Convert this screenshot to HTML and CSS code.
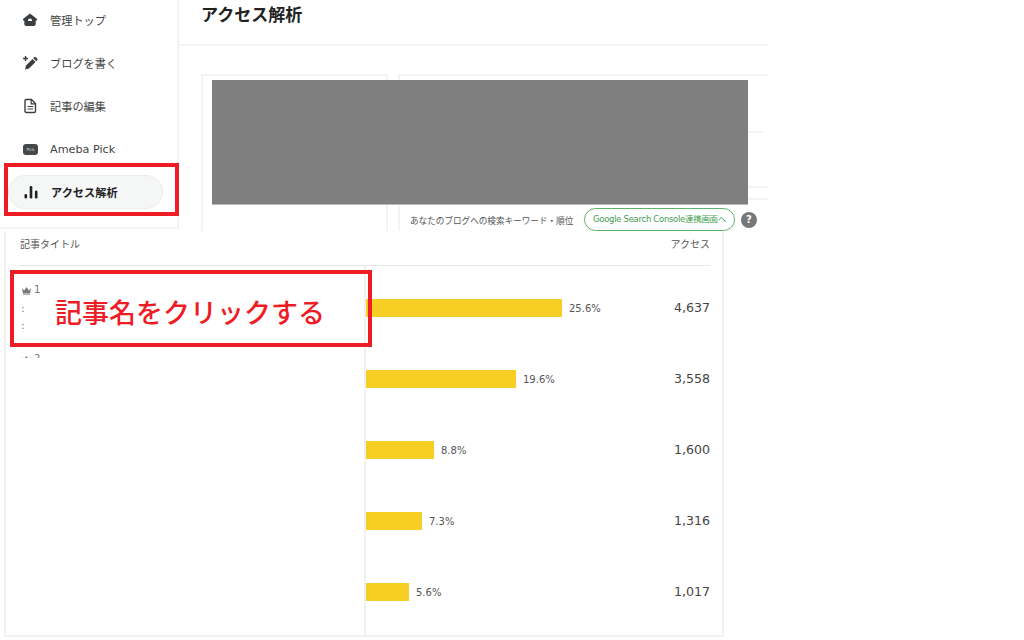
FILE: index.html
```html
<!DOCTYPE html>
<html lang="ja">
  <head>
    <title>アクセス解析</title>
    <meta name="viewport" content="width=device-width, initial-scale=1.0" />
    <link rel="stylesheet" href="styles.css">
  </head>
  <body>
    <section class="dash">
      <nav class="side">
        <a class="side-item">
          <svg class="side-icon" viewBox="0 0 16 16"><path d="M8 1.500 15 7v1.600h-1.300V12a2 2 0 0 1-2 2H4.300a2 2 0 0 1-2-2V8.600H1V7z" fill="#3a3e40"/><path d="M8 6.500a2 2 0 0 1 2 2v.5H6v-.5a2 2 0 0 1 2-2z" fill="#fff"/></svg>
          管理トップ
        </a>
        <a class="side-item">
          <svg class="side-icon" viewBox="0 0 16 16"><path d="M3 14.500l1-4 6.500-6.500 3 3L7 13.500z" fill="#3a3e40"/><path d="M11.300 3.200l1-1a1 1 0 0 1 1.400 0l1.600 1.600a1 1 0 0 1 0 1.400l-1 1z" fill="#3a3e40"/><path d="M3.500 1v5M1 3.500h5" stroke="#3a3e40" stroke-width="1.400"/></svg>
          ブログを書く
        </a>
        <a class="side-item">
          <svg class="side-icon" viewBox="0 0 16 16"><path d="M3 2.800A1.300 1.300 0 0 1 4.300 1.500H9.500L13.500 5.500V13.200A1.300 1.300 0 0 1 12.200 14.500H4.300A1.300 1.300 0 0 1 3 13.200z" fill="none" stroke="#3a3e40" stroke-width="1.400"/><path d="M9.200 1.800V5.800H13.200M5.500 8.500h5.500M5.500 11h5.500" fill="none" stroke="#3a3e40" stroke-width="1.200"/></svg>
          記事の編集
        </a>
        <a class="side-item">
          <span class="pick-icon">Pick</span>
          Ameba Pick
        </a>
        <a class="side-item side-item-active">
          <svg class="side-icon" viewBox="0 0 16 16"><rect x="1.500" y="10" width="2.600" height="4.500" rx="1.200" fill="#222"/><rect x="6.700" y="2" width="2.600" height="12.500" rx="1.200" fill="#222"/><rect x="11.900" y="6.500" width="2.600" height="8" rx="1.200" fill="#222"/></svg>
          アクセス解析
        </a>
      </nav>

      <div class="dash-main">
        <header class="dash-head">
          <h1>アクセス解析</h1>
        </header>
        <div class="cards">
          <div class="card card-small"></div>
          <div class="card card-wide">
            <div class="stat stat-first"></div>
            <div class="stat stat-second"></div>
            <div class="stat stat-third"></div>
            <div class="keywords">
              <span class="keywords-label">あなたのブログへの検索キーワード・順位</span>
              <a class="console-btn">Google Search Console連携画面へ</a>
              <span class="help">?</span>
            </div>
          </div>
        </div>
      </div>

      <div class="redact"></div>
      <div class="mark mark-nav"></div>
    </section>

    <section class="report">
      <div class="report-head">
        <span>記事タイトル</span>
        <span>アクセス</span>
      </div>
      <div class="report-body">
        <div class="titles">
          <div class="rank">
            <svg class="crown" viewBox="0 0 12 10"><path d="M1 2.500 3.500 5 6 1l2.500 4L11 2.500 10 8H2z" fill="#777"/><rect x="2" y="8.500" width="8" height="1" fill="#777"/></svg>
            1
          </div>
          <div class="title-cut title-cut-first">:</div>
          <div class="title-cut">:</div>
          <div class="rank-clipped"><div class="rank">
            <svg class="crown" viewBox="0 0 12 10"><path d="M1 2.500 3.500 5 6 1l2.500 4L11 2.500 10 8H2z" fill="#777"/></svg>
            2
          </div></div>
        </div>
        <div class="rows">
          <div class="row"><div class="bar" style="width:196px"></div><span class="pct">25.6%</span><span class="count">4,637</span></div>
          <div class="row"><div class="bar" style="width:150px"></div><span class="pct">19.6%</span><span class="count">3,558</span></div>
          <div class="row"><div class="bar" style="width:68px"></div><span class="pct">8.8%</span><span class="count">1,600</span></div>
          <div class="row"><div class="bar" style="width:56px"></div><span class="pct">7.3%</span><span class="count">1,316</span></div>
          <div class="row"><div class="bar" style="width:43px"></div><span class="pct">5.6%</span><span class="count">1,017</span></div>
        </div>
      </div>

      <div class="mark mark-title">記事名をクリックする</div>
    </section>
  </body>
</html>
```

FILE: styles.css
```css
* {
  box-sizing: border-box;
}

html,
body {
  height: 640px;
  overflow: hidden;
}

body {
  margin: 0;
  background: #fff;
  color: #333;
  font-family: "DejaVu Sans", "Noto Sans CJK JP", sans-serif;
}

/* top screenshot */
.dash {
  position: relative;
  display: flex;
  width: 768px;
  height: 231px;
}

.side {
  width: 179px;
  height: 229px;
  flex: none;
  border-right: 2px solid #f3f3f3;
  border-bottom: 2px solid #f3f3f3;
  padding: 0 0 0 8px;
  display: flex;
  flex-direction: column;
}

.side-item {
  display: flex;
  align-items: center;
  width: 155px;
  height: 34px;
  margin-top: 9px;
  padding-left: 14px;
  gap: 12px;
  font-size: 11.200px;
  color: #444;
}

.side-item:first-child {
  margin-top: 3px;
}

.side-item-active {
  border: 1px solid #ececec;
  border-radius: 17px;
  background: #f5f6f6;
  font-weight: 700;
  color: #222;
}

.side-icon {
  width: 16px;
  height: 16px;
  flex: none;
}

.pick-icon {
  width: 15px;
  height: 11px;
  flex: none;
  margin-left: 1px;
  border-radius: 3px;
  background: #44484a;
  color: #ddd;
  font-size: 4px;
  line-height: 11px;
  text-align: center;
}

.dash-main {
  flex: 1;
  min-width: 0;
}

.dash-head {
  height: 46px;
  border-bottom: 2px solid #f3f3f3;
  padding-left: 22px;
}

.dash-head h1 {
  margin: 0;
  font-size: 17px;
  line-height: 30px;
  color: #222;
}

.cards {
  display: flex;
  gap: 10px;
  padding: 28px 0 0 22px;
}

.card {
  height: 157px;
  border: 2px solid #f3f3f3;
  border-bottom: none;
}

.card-small {
  width: 187px;
}

.card-wide {
  flex: 1;
  border-right: none;
}

.stat {
  border-bottom: 2px solid #f3f3f3;
}

.stat-first {
  height: 57px;
  margin-right: 4px;
}

.stat-second {
  height: 55px;
}

.stat-third {
  height: 12px;
}

.keywords {
  display: flex;
  align-items: center;
  height: 23px;
  margin-top: 8px;
  padding-left: 10px;
  white-space: nowrap;
}

.keywords-label {
  width: 174px;
  font-size: 8.600px;
  color: #555;
}

.console-btn {
  display: block;
  width: 151px;
  height: 23px;
  border: 1px solid #5cb26a;
  border-radius: 12px;
  font-size: 8.500px;
  line-height: 21px;
  text-align: center;
  color: #3f9c4f;
  letter-spacing: -0.300px;
}

.help {
  width: 16px;
  height: 16px;
  margin-left: 6px;
  border-radius: 50%;
  background: #777;
  color: #fff;
  font-size: 10px;
  font-weight: 700;
  line-height: 16px;
  text-align: center;
}

.redact {
  position: absolute;
  left: 212px;
  top: 80px;
  width: 536px;
  height: 125px;
  background: #7f7f7f;
  border-bottom: 1px solid #bbb;
}

/* red annotation boxes */
.mark {
  position: absolute;
  border: 4px solid #ee1c25;
}

.mark-nav {
  left: 4px;
  top: 163px;
  width: 175px;
  height: 53px;
}

.mark-title {
  left: 10px;
  top: 270px;
  width: 362px;
  height: 77px;
  padding-left: 41px;
  font-size: 27px;
  font-family: "Noto Sans CJK JP", sans-serif;
  font-weight: 500;
  line-height: 76px;
  color: #ee1c25;
  white-space: nowrap;
}

/* bottom screenshot */
.report {
  width: 720px;
  height: 406px;
  margin-left: 4px;
  border-left: 2px solid #f1f1f1;
  border-right: 2px solid #f1f1f1;
  border-bottom: 2px solid #f1f1f1;
}

.report-head {
  display: flex;
  justify-content: space-between;
  height: 35px;
  margin: 0 12px 0 14px;
  border-bottom: 1px solid #e6e6e6;
  font-size: 10px;
  line-height: 28px;
  color: #555;
}

.report-body {
  display: flex;
  height: 369px;
}

.titles {
  width: 360px;
  flex: none;
  border-right: 2px solid #f1f1f1;
  padding: 18px 0 0 15px;
  font-size: 10px;
  color: #777;
}

.rank {
  display: flex;
  align-items: center;
  gap: 2px;
  height: 12px;
  font-size: 10px;
  line-height: 12px;
}

.crown {
  width: 11px;
  height: 9px;
}

.title-cut {
  height: 17px;
  font-size: 11px;
  line-height: 17px;
}

.title-cut-first {
  margin-top: 4px;
}

.rank-clipped {
  height: 5px;
  margin-top: 19px;
  overflow: hidden;
}

.rows {
  flex: 1;
  padding-right: 12px;
  padding-top: 6.500px;
}

.row {
  display: flex;
  align-items: center;
  height: 71px;
}

.bar {
  height: 18px;
  background: #f7ce24;
}

.pct {
  margin-left: 7px;
  font-size: 10px;
  color: #555;
}

.count {
  margin-left: auto;
  margin-bottom: 2px;
  font-size: 12.600px;
  color: #444;
}
```
